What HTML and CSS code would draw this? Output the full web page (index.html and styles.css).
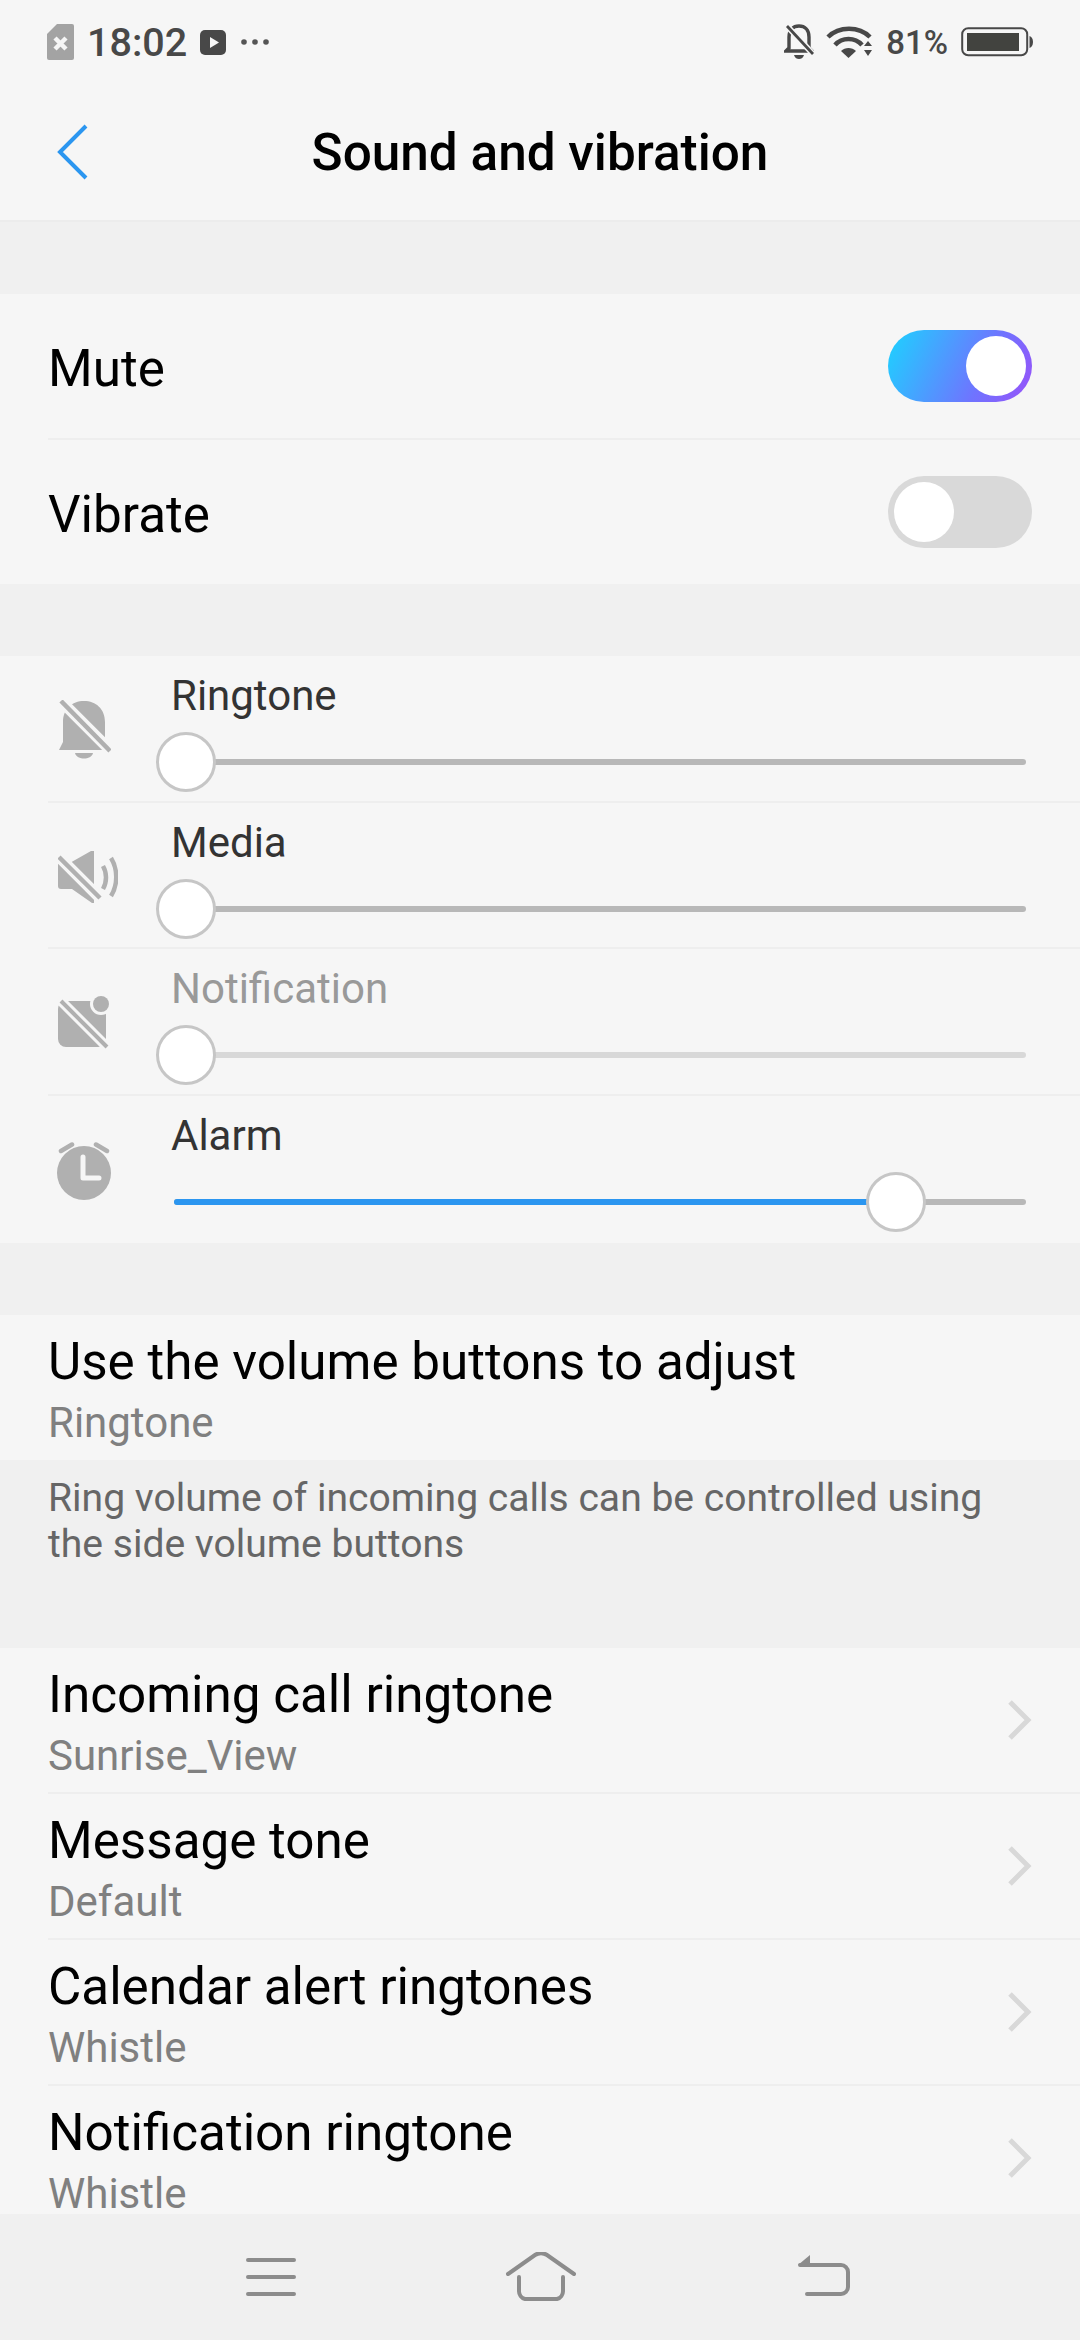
FILE: index.html
```html
<!DOCTYPE html>
<html lang="en">
<head>
    <meta charset="UTF-8">
    <meta name="viewport" content="width=device-width, initial-scale=1.0">
    <title>Sound and vibration</title>
    <link rel="stylesheet" href="styles.css">
</head>
<body>
<div class="phone">
    <div class="status-bar">
        <svg class="ic-sim" viewBox="0 0 27 36"><path d="M10 0H25a2 2 0 0 1 2 2V34a2 2 0 0 1-2 2H2a2 2 0 0 1-2-2V10z" fill="#a3a3a3"/><path d="M8 14l11 11M19 14L8 25" stroke="#f6f6f6" stroke-width="4.500"/></svg>
        <span class="status-time">18:02</span>
        <svg class="ic-play" viewBox="0 0 26 25"><rect width="26" height="25" rx="5" fill="#484848"/><path d="M10 7l9 5.500-9 5.500z" fill="#f6f6f6"/></svg>
        <svg class="ic-dots" viewBox="0 0 30 8"><circle cx="4" cy="4" r="2.800" fill="#555"/><circle cx="15" cy="4" r="2.800" fill="#555"/><circle cx="26" cy="4" r="2.800" fill="#555"/></svg>
        <div class="status-right">
            <svg class="ic-bell-off" viewBox="0 0 30 36"><path d="M5 24V13C5 6 9 2 15 2s10 4 10 11V24l3 3H2z" fill="none" stroke="#484848" stroke-width="3.400"/><path d="M10 31h10c-1 3-3 4-5 4s-4-1-5-4z" fill="#484848"/><path d="M3 2L29 30" stroke="#f6f6f6" stroke-width="6"/><path d="M3 2L29 30" stroke="#484848" stroke-width="2.800"/></svg>
            <svg class="ic-wifi" viewBox="0 0 46 34"><path d="M2 12C13 1 33 1 44 12" fill="none" stroke="#484848" stroke-width="4.500"/><path d="M9 20C16 12 29 12 36 20" fill="none" stroke="#484848" stroke-width="4.500"/><path d="M15 26c4-4 11-4 15 0l-7.500 7z" fill="#484848"/><path d="M38 21l4-5 4 5zM38 25l8 0-4 6z" fill="#484848"/></svg>
            <span class="status-batt">81%</span>
            <svg class="ic-batt" viewBox="0 0 72 30"><rect x="1.200" y="1.200" width="65" height="27" rx="6" fill="none" stroke="#484848" stroke-width="2"/><rect x="6" y="6" width="52" height="18" fill="#42433f"/><path d="M68.500 9c2 .5 3.500 3 3.500 6s-1.500 5.500-3.500 6z" fill="#484848"/></svg>
        </div>
    </div>

    <div class="title-bar">
        <svg class="ic-back" viewBox="0 0 32 56"><path d="M29 2L3 28l26 26" fill="none" stroke="#2b96f0" stroke-width="4"/></svg>
        <h1 class="title">Sound and vibration</h1>
    </div>

    <div class="content">
        <div class="gap"></div>
        <div class="toggle-row">
            <span class="row-title">Mute</span>
            <span class="toggle toggle-on"><span class="knob"></span></span>
        </div>
        <div class="toggle-row toggle-last">
            <span class="row-title">Vibrate</span>
            <span class="toggle"><span class="knob"></span></span>
        </div>
        <div class="gap"></div>

        <div class="slider-row">
            <div class="slider-icon">
                <svg width="54" height="60" viewBox="0 0 54 60"><path d="M2 50l4-8V22C6 9 15 1 27 1s21 8 21 21V50z" fill="#b0b0b0"/><path d="M18 53h18c-1 4-5 5.500-9 5.500s-8-1.500-9-5.500z" fill="#b0b0b0"/><path d="M2 -1L55 52" stroke="#f6f6f6" stroke-width="11"/><path d="M4 1L53 51" stroke="#b0b0b0" stroke-width="4.500"/></svg>
            </div>
            <div class="slider-main">
                <div class="slider-label">Ringtone</div>
                <div class="track"><div class="thumb" style="left: 1.4%"></div></div>
            </div>
        </div>
        <div class="slider-row">
            <div class="slider-icon icon-wide">
                <svg width="60" height="54" viewBox="0 0 60 54"><path d="M0 14H10L33 1h3V53h-2L14 39H3a3 3 0 0 1-3-3z" fill="#b0b0b0"/><path d="M-1 5L44 50" stroke="#f6f6f6" stroke-width="11"/><path d="M1 7L42 48" stroke="#b0b0b0" stroke-width="4.500"/><path d="M45 16c4 7 4 16 0 23" fill="none" stroke="#b0b0b0" stroke-width="4.500"/><path d="M53 8c7 11 7 27 0 38" fill="none" stroke="#b0b0b0" stroke-width="4.500"/></svg>
            </div>
            <div class="slider-main">
                <div class="slider-label">Media</div>
                <div class="track"><div class="thumb" style="left: 1.4%"></div></div>
            </div>
        </div>
        <div class="slider-row row-disabled">
            <div class="slider-icon">
                <svg width="52" height="56" viewBox="0 0 52 56"><rect x="0" y="5" width="48" height="46" rx="8" fill="#b0b0b0"/><circle cx="43" cy="8" r="11" fill="#f6f6f6"/><circle cx="43" cy="8" r="8" fill="#b0b0b0"/><path d="M1 3L51 53" stroke="#f6f6f6" stroke-width="10"/><path d="M3 5L49 51" stroke="#b0b0b0" stroke-width="4"/></svg>
            </div>
            <div class="slider-main">
                <div class="slider-label">Notification</div>
                <div class="track"><div class="thumb" style="left: 1.4%"></div></div>
            </div>
        </div>
        <div class="slider-row slider-last">
            <div class="slider-icon">
                <svg width="54" height="58" viewBox="0 0 54 58"><circle cx="27" cy="31" r="27" fill="#b0b0b0"/><path d="M4 9L15 2.500M50 9L39 2.500" stroke="#b0b0b0" stroke-width="4.500" stroke-linecap="round"/><path d="M26 15V36H42" fill="none" stroke="#f6f6f6" stroke-width="5" stroke-linejoin="round" stroke-linecap="round"/></svg>
            </div>
            <div class="slider-main">
                <div class="slider-label">Alarm</div>
                <div class="track">
                    <div class="track-fill" style="width: 84.7%"></div>
                    <div class="thumb" style="left: 84.7%"></div>
                </div>
            </div>
        </div>
        <div class="gap"></div>

        <div class="list-row list-first">
            <div class="row-text">
                <div class="row-title">Use the volume buttons to adjust</div>
                <div class="row-sub">Ringtone</div>
            </div>
        </div>
        <div class="hint">Ring volume of incoming calls can be controlled using the side volume buttons</div>

        <div class="list-row">
            <div class="row-text">
                <div class="row-title">Incoming call ringtone</div>
                <div class="row-sub">Sunrise_View</div>
            </div>
            <svg class="chevron" viewBox="0 0 24 40"><path d="M2 2l18 18L2 38" fill="none" stroke="#d8d8d8" stroke-width="5"/></svg>
        </div>
        <div class="list-row">
            <div class="row-text">
                <div class="row-title">Message tone</div>
                <div class="row-sub">Default</div>
            </div>
            <svg class="chevron" viewBox="0 0 24 40"><path d="M2 2l18 18L2 38" fill="none" stroke="#d8d8d8" stroke-width="5"/></svg>
        </div>
        <div class="list-row">
            <div class="row-text">
                <div class="row-title">Calendar alert ringtones</div>
                <div class="row-sub">Whistle</div>
            </div>
            <svg class="chevron" viewBox="0 0 24 40"><path d="M2 2l18 18L2 38" fill="none" stroke="#d8d8d8" stroke-width="5"/></svg>
        </div>
        <div class="list-row">
            <div class="row-text">
                <div class="row-title">Notification ringtone</div>
                <div class="row-sub">Whistle</div>
            </div>
            <svg class="chevron" viewBox="0 0 24 40"><path d="M2 2l18 18L2 38" fill="none" stroke="#d8d8d8" stroke-width="5"/></svg>
        </div>
    </div>

    <div class="nav-bar">
        <svg class="nav-menu" viewBox="0 0 52 44"><path d="M3 5H49M3 22H49M3 39H49" stroke="#8c8c8c" stroke-width="4" stroke-linecap="round"/></svg>
        <svg class="nav-home" viewBox="0 0 72 50"><path d="M3 22L30 3c4-2.500 8-2.500 12 0L69 22" fill="none" stroke="#8c8c8c" stroke-width="4" stroke-linecap="round"/><path d="M14 25V39a8 8 0 0 0 6 8H52a8 8 0 0 0 6-8V25" fill="none" stroke="#8c8c8c" stroke-width="4" stroke-linecap="round"/></svg>
        <svg class="nav-back" viewBox="0 0 54 44"><path d="M3 10H44a7 7 0 0 1 7 7V32a7 7 0 0 1-7 7H10" fill="none" stroke="#8c8c8c" stroke-width="4" stroke-linecap="round"/><path d="M1 10L13 0V10z" fill="#8c8c8c"/></svg>
    </div>
</div>
</body>
</html>
```
FILE: styles.css
```css
html, body {
    margin: 0;
    padding: 0;
}

body {
    font-family: 'Roboto', sans-serif;
    background-color: #f6f6f6;
    color: #000;
}

.phone {
    width: 1080px;
    height: 2340px;
    display: flex;
    flex-direction: column;
    overflow: hidden;
}

/* status bar */
.status-bar {
    height: 84px;
    padding: 0 47px 0 47px;
    box-sizing: border-box;
    display: flex;
    align-items: center;
    color: #484848;
}

.ic-sim {
    width: 27px;
    height: 36px;
}

.status-time {
    font-size: 39.5px;
    font-weight: 500;
    margin-left: 13px;
}

.ic-play {
    width: 26px;
    height: 25px;
    margin-left: 13px;
}

.ic-dots {
    width: 30px;
    height: 8px;
    margin-left: 14px;
}

.status-right {
    margin-left: auto;
    display: flex;
    align-items: center;
}

.ic-bell-off {
    width: 30px;
    height: 36px;
}

.ic-wifi {
    width: 46px;
    height: 34px;
    margin-left: 12px;
}

.status-batt {
    font-size: 33px;
    font-weight: 500;
    margin-left: 14px;
}

.ic-batt {
    width: 72px;
    height: 30px;
    margin-left: 13px;
}

/* title */
.title-bar {
    height: 138px;
    box-sizing: border-box;
    border-bottom: 2px solid #ececec;
    display: flex;
    align-items: center;
    justify-content: center;
    position: relative;
}

.ic-back {
    position: absolute;
    left: 57px;
    top: 40px;
    width: 32px;
    height: 56px;
}

.title {
    margin: 0;
    font-size: 51.3px;
    font-weight: 500;
}

/* main list */
.content {
    flex: 1;
    min-height: 0;
    overflow: hidden;
}

.gap {
    height: 72px;
    background-color: #f0f0f0;
}

.toggle-row {
    margin-left: 48px;
    padding-right: 48px;
    height: 146px;
    box-sizing: border-box;
    border-bottom: 2px solid #eeeeee;
    display: flex;
    align-items: center;
    justify-content: space-between;
}

.toggle-last {
    height: 144px;
    border-bottom: none;
}

.row-title {
    font-size: 51.2px;
    line-height: 60px;
}

.toggle-row .row-title {
    margin-top: 6px;
}

.toggle {
    width: 144px;
    height: 72px;
    border-radius: 36px;
    padding: 6px;
    box-sizing: border-box;
    background-color: #d9d9d9;
    display: flex;
}

.toggle-on {
    background: linear-gradient(115deg, #22ccff 5%, #6f74ff 65%, #9356fa 95%);
    justify-content: flex-end;
}

.knob {
    width: 60px;
    height: 60px;
    border-radius: 50%;
    background-color: #ffffff;
}

/* volume sliders */
.slider-row {
    margin-left: 48px;
    padding-right: 54px;
    height: 146.7px;
    box-sizing: border-box;
    border-bottom: 2px solid #eeeeee;
    display: flex;
}

.slider-last {
    border-bottom: none;
}

.slider-icon {
    width: 72px;
    display: flex;
    align-items: center;
    justify-content: center;
    padding-top: 4px;
    margin-right: 54px;
    flex-shrink: 0;
}

.icon-wide svg {
    margin-left: 8px;
}

.slider-main {
    flex: 1;
    padding-top: 19px;
}

.slider-label {
    font-size: 42px;
    line-height: 42px;
    color: #333333;
    margin-left: -3px;
}

.track {
    position: relative;
    height: 6px;
    margin-top: 42px;
    border-radius: 3px;
    background-color: #b8b8b8;
}

.track-fill {
    height: 6px;
    border-radius: 3px 0 0 3px;
    background-color: #2b96f0;
}

.thumb {
    position: absolute;
    top: -27px;
    width: 60px;
    height: 60px;
    margin-left: -30px;
    box-sizing: border-box;
    border: 3px solid #c6c6c6;
    border-radius: 50%;
    background-color: #ffffff;
}

.row-disabled .slider-label {
    color: #999999;
}

.row-disabled .track {
    background-color: #d8d8d8;
}

/* two line rows */
.list-row {
    margin-left: 48px;
    padding-right: 48px;
    height: 146.2px;
    box-sizing: border-box;
    border-bottom: 2px solid #eeeeee;
    display: flex;
    align-items: center;
    justify-content: space-between;
}

.list-first {
    height: 145px;
    border-bottom: none;
}

.row-text {
    padding-top: 12px;
}

.row-sub {
    font-size: 42px;
    line-height: 62px;
    color: #808080;
}

.chevron {
    width: 24px;
    height: 40px;
}

.hint {
    height: 188px;
    box-sizing: border-box;
    padding: 15px 48px 0;
    background-color: #f0f0f0;
    font-size: 39.1px;
    line-height: 46px;
    color: #666666;
}

/* bottom nav */
.nav-bar {
    height: 126px;
    flex-shrink: 0;
    padding-left: 245px;
    background-color: #f0f0f0;
    display: flex;
    align-items: center;
}

.nav-menu {
    width: 52px;
    height: 44px;
}

.nav-home {
    width: 72px;
    height: 50px;
    margin-left: 208px;
}

.nav-back {
    width: 54px;
    height: 44px;
    margin-left: 220px;
}
```
